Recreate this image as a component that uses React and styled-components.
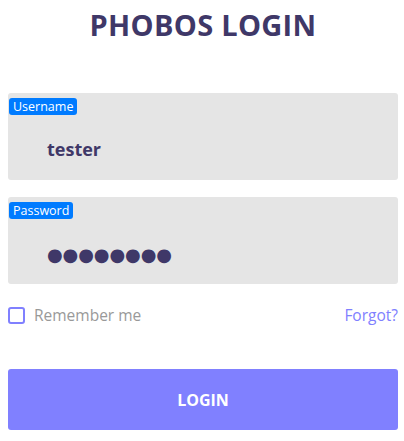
import React from "react";
import styled, { createGlobalStyle } from "styled-components";

const ink = "#3f3868";
const accent = "#8080ff";

const GlobalStyle = createGlobalStyle`
  * { box-sizing: border-box; }
  body {
    margin: 0;
    background: #fff;
    font-family: "Open Sans", "Noto Sans", sans-serif;
  }
`;

const Page = styled.div`
  width: 404px;
  padding: 0 6px 0 8px;
`;

const Title = styled.h1`
  margin: 6px 0 0;
  text-align: center;
  color: ${ink};
  font-size: 29px;
  font-weight: 700;
  line-height: 38px;
  letter-spacing: 0.3px;
`;

const Form = styled.form`
  display: flex;
  flex-direction: column;
  margin-top: 49px;
`;

const Field = styled.div`
  position: relative;
  height: 87px;
  background: #e5e5e5;
  border-radius: 3px;
  display: flex;
  align-items: center;
  padding: 24px 0 0 39px;
  & + & {
    margin-top: 17px;
  }
`;

const Badge = styled.span`
  position: absolute;
  top: 5px;
  left: 1px;
  background: #007bff;
  color: #fff;
  font-size: 12.5px;
  line-height: 17px;
  padding: 0 4px;
  border-radius: 3px;
`;

const Value = styled.span`
  color: ${ink};
  font-size: 18px;
  font-weight: 700;
`;

const Dots = styled.span`
  color: ${ink};
  font-family: "DejaVu Sans", sans-serif;
  font-size: 18px;
  letter-spacing: -0.1px;
  line-height: 1;
  margin-top: 4px;
`;

const Options = styled.div`
  display: flex;
  align-items: center;
  justify-content: space-between;
  margin-top: 20px;
  font-size: 15.5px;
`;

const Remember = styled.label`
  display: flex;
  align-items: center;
  gap: 9px;
  color: #999;
`;

const Box = styled.span`
  width: 17px;
  height: 17px;
  border: 2px solid ${accent};
  border-radius: 3px;
`;

const Forgot = styled.a`
  color: ${accent};
  text-decoration: none;
`;

const Button = styled.button`
  margin-top: 43px;
  height: 61px;
  border: none;
  border-radius: 3px;
  background: ${accent};
  color: #fff;
  font-family: inherit;
  font-size: 16px;
  font-weight: 700;
`;

export default function App() {
  return (
    <Page>
      <GlobalStyle />
      <Title>PHOBOS LOGIN</Title>
      <Form onSubmit={(e) => e.preventDefault()}>
        <Field>
          <Badge>Username</Badge>
          <Value>tester</Value>
        </Field>
        <Field>
          <Badge>Password</Badge>
          <Dots>●●●●●●●●</Dots>
        </Field>
        <Options>
          <Remember>
            <Box />
            Remember me
          </Remember>
          <Forgot href="#">Forgot?</Forgot>
        </Options>
        <Button type="submit">LOGIN</Button>
      </Form>
    </Page>
  );
}
